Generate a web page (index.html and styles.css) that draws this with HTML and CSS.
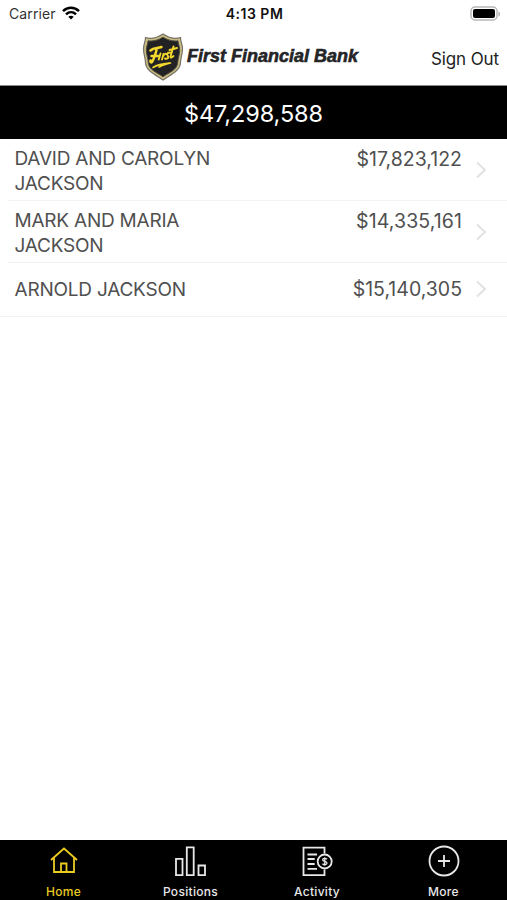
FILE: index.html
```html
<!DOCTYPE html>
<html lang="en">
<head>
<meta charset="utf-8">
<title>First Financial Bank</title>
<link rel="stylesheet" href="styles.css">
</head>
<body>
<div class="app">
  <div class="status">
    <div class="carrier"><span>Carrier</span>
      <svg class="wifi" width="18" height="14" viewBox="0 0 18 14" fill="none" stroke="#000" stroke-width="2.5"><path d="M1 5.1C5.6.6 12.4.6 17 5.1"/><path d="M4 8.3c2.9-2.7 7.100-2.700 10 0"/><path d="M6.300 10.700C7.900 9.300 10.100 9.300 11.700 10.700L9 13.400Z" fill="#000" stroke="none"/></svg>
    </div>
    <div class="time">4:13 PM</div>
    <svg class="battery" width="31" height="16" viewBox="0 0 31 16"><rect x="2" y="1" width="26" height="13" rx="4" fill="#fff" stroke="#b8b8b8" stroke-width="1.500"/><rect x="4" y="3" width="22" height="9" rx="2" fill="#000"/><path d="M29.500 5.500c2 .6 2 4.400 0 5z" fill="#aaa"/></svg>
  </div>
  <header class="header">
    <div class="brand">
      <svg class="shield" width="42" height="48" viewBox="0 0 42 48"><path d="M21 1C15 5 8 6 3.500 4.500 3.500 9 1.500 11 1.500 16c0 5 1.800 8 2 14C4 38 14 42 21 47c7-5 17-9 17.500-17 .2-6 2-9 2-14 0-5-2-7-2-11.500C34 6 27 5 21 1Z" fill="#c9bd83" stroke="#77736a" stroke-width="1.200"/><path d="M21 4.200C15.500 7.500 10 8.500 6 7.800 6 11 4.300 13 4.300 17c0 4 1.700 8 2 13C7 37 15 39.500 21 43.800c6-4.300 14-6.800 14.700-13.800.3-5 2-9 2-13 0-4-1.700-6-1.700-9.200-4 .7-9.500-.3-15-3.600Z" fill="#222225" stroke="#504c3c"/><g fill="none" stroke="#f4d82c" stroke-linecap="round" stroke-linejoin="round"><path d="M8.500 17.500c3-3 7-2 11-3.500M14.500 17c-1 4-2 8-4.500 12-1 .8-2 0-1.500-1.500M9.500 23h7" stroke-width="2.500"/><path d="M18.500 20.500l-1.800 6M21.500 21l-1.500 5.500M21.500 22.500c.8-1.500 2-2 2.800-1.500M28 19.500c-3.500 0-3 2-2 4s-1.500 2.500-3 2M31.500 13.500l-3 10c0 2 1.500.8 3-.5M27.500 17l7.500-2" stroke-width="1.900"/><path d="M11 34.500c6-3.800 12-4 17.500-4.500-5.500 1.500-8 2-11.500 4" stroke-width="1.600"/></g></svg>
      <span class="bank">First Financial Bank</span>
    </div>
    <div class="signout">Sign Out</div>
  </header>
  <div class="total"><span>$47,298,588</span></div>
  <main class="accounts">
    <div class="row"><div class="name">DAVID AND CAROLYN<br>JACKSON</div><div class="amount">$17,823,122</div><svg class="chevron" width="12" height="18" viewBox="0 0 12 18"><path d="M2 1.500L10 9 2 16.500"/></svg></div>
    <div class="row"><div class="name">MARK AND MARIA<br>JACKSON</div><div class="amount wide">$14,335,161</div><svg class="chevron" width="12" height="18" viewBox="0 0 12 18"><path d="M2 1.500L10 9 2 16.500"/></svg></div>
    <div class="row single"><div class="name">ARNOLD JACKSON</div><div class="amount">$15,140,305</div><svg class="chevron" width="12" height="18" viewBox="0 0 12 18"><path d="M2 1.500L10 9 2 16.500"/></svg></div>
  </main>
  <nav class="tabs">
    <div class="tab active"><svg width="34" height="34" viewBox="0 0 34 34"><path d="M4 16L17 4.500 30 16M7 14v14h20V14M14 28v-8.500h5.500V28"/></svg><span>Home</span></div>
    <div class="tab"><svg width="34" height="34" viewBox="0 0 34 34"><path d="M2 14.800h6.500v16.400H2zM12.800 3.300h6.900v27.900h-6.900zM24.500 21.500H31v9.700h-6.500z"/></svg><span>Positions</span></div>
    <div class="tab"><svg width="34" height="34" viewBox="0 0 34 34"><path d="M24.500 9.500V3.700h-21v27.500h21v-5.700M7.500 10.500H17M7.500 15h7.200M7.500 20h7.200M7.500 24.800H17"/><circle cx="24.700" cy="17.500" r="7"/><path class="dollar" d="M27 15.200c-1.300-1.300-4.300-1.100-4.300.5 0 2.200 4.300 1.200 4.300 3.400 0 2-3.200 2.100-4.500.6M24.800 13.200v8.600"/></svg><span>Activity</span></div>
    <div class="tab"><svg width="34" height="34" viewBox="0 0 34 34"><circle cx="17" cy="17" r="14.500"/><path d="M17 11v12M11 17h12"/></svg><span>More</span></div>
  </nav>
</div>
</body>
</html>
```
FILE: styles.css
```css
* { box-sizing: border-box; }
body { margin: 0; background: #fff; font-family: Inter, "Liberation Sans", sans-serif; }
.app { height: 900px; display: flex; flex-direction: column; overflow: hidden; }
.status { height: 27px; display: grid; grid-template-columns: 1fr auto 1fr; padding: 0 7px 0 9px; align-items: center; color: #111; }
.carrier { display: flex; align-items: center; gap: 6px; font-size: 14px; line-height: 26px; letter-spacing: .1px; color: #333; }
.wifi { display: block; margin-top: -2px; }
.time { font-size: 14px; font-weight: 600; line-height: 28px; letter-spacing: .5px; }
.battery { justify-self: end; margin-top: -1px; }
.header { height: 59px; border-bottom: 1px solid #888; display: grid; grid-template-columns: 142px 1fr auto; padding-right: 8px; }
.brand { grid-column: 2; display: flex; padding-top: 6px; }
.shield { flex: none; }
.bank { font-family: "Liberation Sans", sans-serif; font-size: 18px; font-weight: 700; font-style: italic; line-height: 46px; margin-left: 3px; color: #252426; white-space: nowrap; -webkit-text-stroke: .6px #252426; }
.signout { font-size: 17px; line-height: 64px; color: #222; white-space: nowrap; letter-spacing: -.1px; }
.total { height: 53px; background: #000; color: #fff; font-size: 23.5px; line-height: 55px; text-align: center; font-weight: 400; letter-spacing: -.1px; }
.row { height: 62px; margin-left: 8px; padding: 7px 20px 0 7px; border-bottom: 1px solid #f3f3f3; display: grid; grid-template-columns: 1fr auto 12px; column-gap: 13px; color: #505050; font-size: 19.5px; line-height: 24.5px; }
.row + .row { height: 61.5px; }
.name { font-size: 19px; letter-spacing: -.22px; margin-left: -.5px; padding-top: 1px; }
.wide { letter-spacing: .1px; }
.amount { padding-top: .5px; }
.chevron { margin-top: 15px; fill: none; stroke: #e2e2e2; stroke-width: 2; }
.row.single { height: 54.5px; margin-left: 0; padding: 0 20px 0 15px; align-items: center; }
.single .chevron { margin-top: 0; }
.tabs { margin-top: auto; height: 60.5px; background: #000; color: #e8e8e8; display: grid; grid-template-columns: 127px 127px 126px 127px; }
.tab { display: flex; flex-direction: column; align-items: center; padding-top: 4.5px; font-size: 12px; font-weight: 500; line-height: 27px; letter-spacing: .3px; }
.tab svg { fill: none; stroke: currentColor; stroke-width: 1.8; flex: none; }
.tab .dollar { stroke-width: 1.3; }
.active { color: #eacb20; }
```
